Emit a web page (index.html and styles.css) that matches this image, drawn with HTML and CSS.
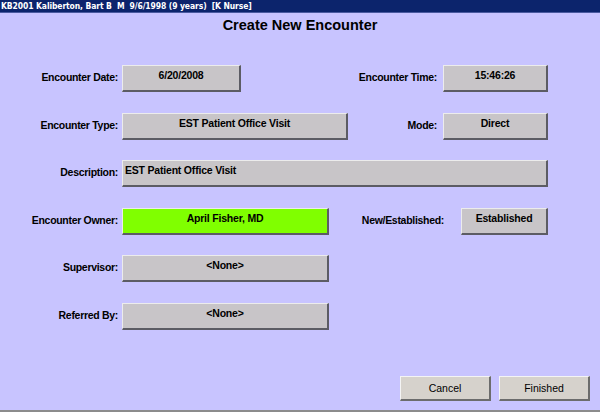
FILE: index.html
```html
<!DOCTYPE html>
<html>
<head>
<meta charset="utf-8">
<link rel="stylesheet" href="styles.css">
</head>
<body>
<div class="screen">
  <div class="topbar">KB2001 Kaliberton, Bart B  M  9/6/1998 (9 years)  [K Nurse]</div>
  <h1 class="title">Create New Encounter</h1>
  <div class="form">
    <div class="row">
      <span class="label">Encounter Date:</span>
      <div class="field w-date">6/20/2008</div>
      <div class="right">
        <span class="rlabel">Encounter Time:</span>
        <div class="field w-small">15:46:26</div>
      </div>
    </div>
    <div class="row">
      <span class="label">Encounter Type:</span>
      <div class="field w-type">EST Patient Office Visit</div>
      <div class="right">
        <span class="rlabel">Mode:</span>
        <div class="field w-small">Direct</div>
      </div>
    </div>
    <div class="row">
      <span class="label">Description:</span>
      <div class="field w-desc left">EST Patient Office Visit</div>
    </div>
    <div class="row">
      <span class="label">Encounter Owner:</span>
      <div class="field w-owner green">April Fisher, MD</div>
      <div class="right">
        <span class="rlabel ne">New/Established:</span>
        <div class="field w-est">Established</div>
      </div>
    </div>
    <div class="row">
      <span class="label">Supervisor:</span>
      <div class="field w-owner">&lt;None&gt;</div>
    </div>
    <div class="row">
      <span class="label">Referred By:</span>
      <div class="field w-owner">&lt;None&gt;</div>
    </div>
  </div>
  <div class="buttons">
    <button class="btn">Cancel</button>
    <button class="btn">Finished</button>
  </div>
</div>
</body>
</html>
```
FILE: styles.css
```css
html, body {
  margin: 0;
  padding: 0;
}
body {
  width: 600px;
  height: 412px;
  overflow: hidden;
  background: #8c8c8c;
}
.screen {
  width: 600px;
  height: 410px;
  background: #c8c4ff;
  display: flex;
  flex-direction: column;
  font-family: "Liberation Sans", Arial, sans-serif;
  color: #000;
}
.topbar {
  height: 12px;
  line-height: 12px;
  background: #0c246c;
  color: #fff;
  font-family: "DejaVu Sans Condensed", "DejaVu Sans", Verdana, sans-serif;
  font-size: 8.5px;
  font-weight: bold;
  letter-spacing: -0.1px;
  white-space: pre;
  padding-left: 1px;
  border-bottom: 1px solid #4a5aa0;
}
.title {
  margin: 0;
  height: 20px;
  line-height: 20px;
  padding-top: 2px;
  text-align: center;
  font-size: 14.5px;
  font-weight: bold;
}
.form {
  margin-top: 30px;
  width: 548px;
  display: flex;
  flex-direction: column;
  gap: 20.5px;
}
.row {
  display: flex;
  align-items: center;
  height: 27px;
}
.label {
  width: 118px;
  text-align: right;
  padding-right: 4px;
  font-size: 10.5px;
  font-weight: bold;
  letter-spacing: -0.3px;
  margin-top: -3px;
  flex: none;
}
.right {
  margin-left: auto;
  display: flex;
  align-items: center;
}
.rlabel {
  font-size: 10.5px;
  font-weight: bold;
  letter-spacing: -0.3px;
  margin-right: 6px;
  margin-top: -3px;
}
.rlabel.ne {
  margin-right: 17px;
}
.field {
  box-sizing: border-box;
  height: 27px;
  background: #c8c5c8;
  border-top: 1px solid #ececec;
  border-left: 1px solid #ececec;
  border-right: 2px solid #5c5c64;
  border-bottom: 2px solid #5c5c64;
  font-size: 10.5px;
  font-weight: bold;
  letter-spacing: -0.2px;
  text-align: center;
  padding-top: 3px;
  flex: none;
}
.field.left {
  text-align: left;
  padding-left: 2px;
}
.field.green {
  background: #80ff00;
}
.w-date { width: 119px; }
.w-small { width: 105px; }
.w-type { width: 226px; }
.w-desc { width: 426px; }
.w-owner { width: 207px; }
.w-est { width: 87px; }
.buttons {
  margin-top: auto;
  margin-bottom: 9px;
  display: flex;
  justify-content: flex-end;
  gap: 8px;
  padding-right: 10px;
}
.btn {
  box-sizing: border-box;
  width: 91px;
  height: 25px;
  background: #d6d2cc;
  border-top: 1px solid #f4f4f4;
  border-left: 1px solid #f4f4f4;
  border-right: 2px solid #6c6c6c;
  border-bottom: 2px solid #6c6c6c;
  font-family: "Liberation Sans", Arial, sans-serif;
  font-size: 10.5px;
  color: #000;
  padding: 0;
}
```
